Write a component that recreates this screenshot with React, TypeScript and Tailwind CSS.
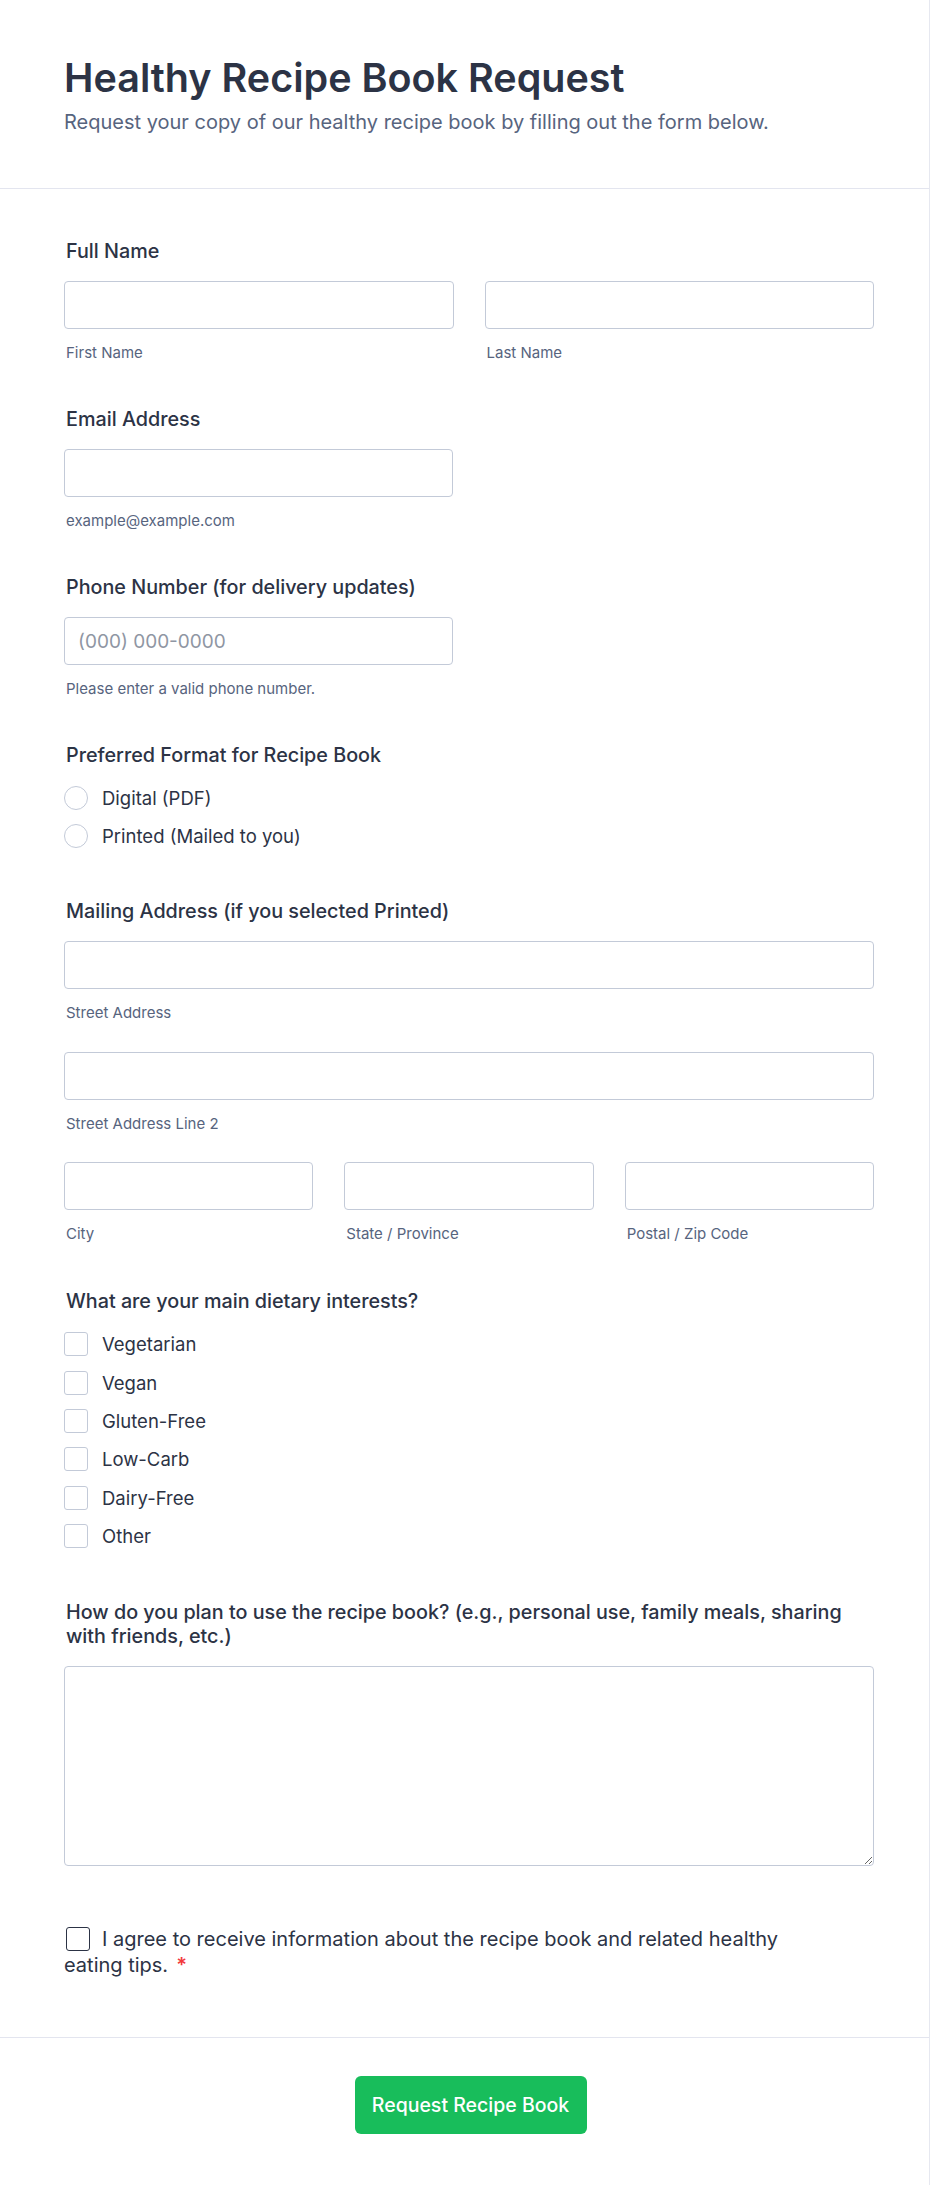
import React from "react";

const font = { fontFamily: "Inter, 'Noto Sans', sans-serif" };

function Label({ children }: { children: React.ReactNode }) {
  return (
    <div className="pl-[2px] text-[19.75px] leading-[24px] font-medium text-[#2c3345]">
      {children}
    </div>
  );
}

function SubLabel({ children }: { children: React.ReactNode }) {
  return (
    <div className="mt-[14px] pl-[2px] text-[15px] leading-[20px] text-[#57647e]">
      {children}
    </div>
  );
}

function Input({ placeholder }: { placeholder?: string }) {
  return (
    <input
      type="text"
      placeholder={placeholder}
      className="block w-full h-[48px] rounded-[4px] border border-[#c3cad8] bg-white px-[13px] text-[19px] text-[#2c3345] placeholder:text-[#8f96a3] outline-none"
      style={font}
    />
  );
}

function Radio({ label }: { label: string }) {
  return (
    <div className="flex h-[38px] items-center">
      <span className="h-[24px] w-[24px] rounded-full border border-[#c3cad8] bg-white" />
      <span className="ml-[14px] text-[18.5px] leading-[24px] text-[#2c3345]">{label}</span>
    </div>
  );
}

function Check({ label }: { label: string }) {
  return (
    <div className="flex h-[38.4px] items-center">
      <span className="h-[24px] w-[24px] rounded-[3px] border border-[#c3cad8] bg-white" />
      <span className="ml-[14px] text-[18.5px] leading-[24px] text-[#2c3345]">{label}</span>
    </div>
  );
}

export default function App() {
  return (
    <div className="w-full min-h-[2185px] bg-white border-r border-[#e6e8f0]" style={font}>
      {/* Header */}
      <div className="pl-16 pr-[55px] pt-[56px] pb-[52px] border-b border-[#e3e5ef]">
        <h1 className="text-[39.5px] leading-[44px] font-semibold text-[#2c3345]">
          Healthy Recipe Book Request
        </h1>
        <p className="mt-[8px] text-[20px] leading-[28px] text-[#57647e]">
          Request your copy of our healthy recipe book by filling out the form below.
        </p>
      </div>

      {/* Form body */}
      <div className="pl-16 pr-[55px] pt-[50px] pb-[59px] border-b border-[#e3e5ef]">
        {/* Full name */}
        <div className="pb-[44px]">
          <Label>Full Name</Label>
          <div className="mt-[18px] grid grid-cols-2 gap-x-[31px]">
            <div>
              <Input />
              <SubLabel>First Name</SubLabel>
            </div>
            <div>
              <Input />
              <SubLabel>Last Name</SubLabel>
            </div>
          </div>
        </div>

        {/* Email */}
        <div className="pb-[44px]">
          <Label>Email Address</Label>
          <div className="mt-[18px] w-[389px]">
            <Input />
            <SubLabel>example@example.com</SubLabel>
          </div>
        </div>

        {/* Phone */}
        <div className="pb-[44px]">
          <Label>Phone Number (for delivery updates)</Label>
          <div className="mt-[18px] w-[389px]">
            <Input placeholder="(000) 000-0000" />
            <SubLabel>Please enter a valid phone number.</SubLabel>
          </div>
        </div>

        {/* Preferred Format */}
        <div className="pb-[44px]">
          <Label>Preferred Format for Recipe Book</Label>
          <div className="mt-3">
            <Radio label="Digital (PDF)" />
            <Radio label="Printed (Mailed to you)" />
          </div>
        </div>

        {/* Mailing Address */}
        <div className="pb-[45px]">
          <Label>Mailing Address (if you selected Printed)</Label>
          <div className="mt-[18px]">
            <Input />
            <SubLabel>Street Address</SubLabel>
          </div>
          <div className="mt-[29px]">
            <Input />
            <SubLabel>Street Address Line 2</SubLabel>
          </div>
          <div className="mt-[28px] grid grid-cols-3 gap-x-[31px]">
            <div>
              <Input />
              <SubLabel>City</SubLabel>
            </div>
            <div>
              <Input />
              <SubLabel>State / Province</SubLabel>
            </div>
            <div>
              <Input />
              <SubLabel>Postal / Zip Code</SubLabel>
            </div>
          </div>
        </div>

        {/* Dietary interests */}
        <div className="pb-[45px]">
          <Label>What are your main dietary interests?</Label>
          <div className="mt-3">
            <Check label="Vegetarian" />
            <Check label="Vegan" />
            <Check label="Gluten-Free" />
            <Check label="Low-Carb" />
            <Check label="Dairy-Free" />
            <Check label="Other" />
          </div>
        </div>

        {/* Usage */}
        <div className="pb-[60px]">
          <Label>
            How do you plan to use the recipe book? (e.g., personal use, family meals, sharing
            with friends, etc.)
          </Label>
          <textarea
            className="mt-[18px] block w-full h-[200px] rounded-[4px] border border-[#c3cad8] bg-white px-[13px] py-[10px] text-[18px] outline-none"
            style={font}
          />
        </div>

        {/* Consent */}
        <div className="w-[750px] text-[20px] leading-[26px] text-[#2c3345]">
          <span className="inline-block align-top mt-[1px] ml-[2px] mr-[12px] h-[24px] w-[24px] rounded-[3px] border-[1.5px] border-[#2c3345] bg-white" />
          I agree to receive information about the recipe book and related healthy eating tips.
          <span className="ml-[8px] text-[#f23a3c] font-semibold">*</span>
        </div>
      </div>

      {/* Footer */}
      <div className="flex justify-center pl-3 pt-[38px] pb-[50px]">
        <button className="h-[58px] w-[232px] rounded-[6px] bg-[#18bd5b] text-[19.5px] font-medium text-white">
          Request Recipe Book
        </button>
      </div>
    </div>
  );
}
